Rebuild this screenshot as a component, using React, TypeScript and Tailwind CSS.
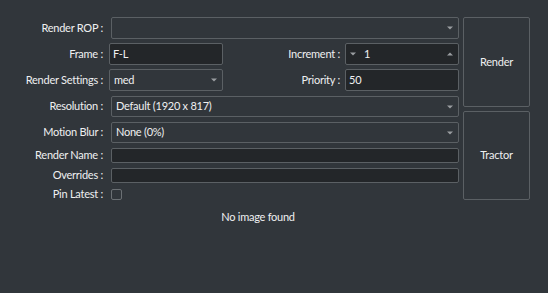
import React from 'react';

const Down = () => (
  <svg width="6" height="4" viewBox="0 0 6 4" className="shrink-0">
    <path d="M0 0.5h6L3 3.5z" fill="#9a9ea1" />
  </svg>
);

const Up = () => (
  <svg width="6" height="4" viewBox="0 0 6 4" className="shrink-0">
    <path d="M0 3.5h6L3 0.5z" fill="#9a9ea1" />
  </svg>
);

const Label = ({ text, w = 'w-[105px]' }: { text: string; w?: string }) => (
  <div className={`${w} shrink-0 pr-[2px] text-right whitespace-nowrap`}>{text}</div>
);

const Combo = ({ value, cls }: { value?: string; cls: string }) => (
  <div className={`${cls} flex items-center justify-between border border-[#5b6064] bg-[#31363b] rounded-[2px] pl-[4px] pr-[5px]`}>
    <span>{value}</span>
    <Down />
  </div>
);

const Edit = ({ value, cls }: { value?: string; cls: string }) => (
  <div className={`${cls} flex items-center border border-[#5b6064] bg-[#232629] rounded-[2px] pl-[3px]`}>
    <span>{value}</span>
  </div>
);

export default function App() {
  return (
    <div
      className="w-[548px] h-[293px] bg-[#31363b] text-[#eff0f1] text-[11px] tracking-[-0.25px] overflow-hidden"
      style={{ fontFamily: 'Lato, "Noto Sans", sans-serif' }}
    >
      <div className="flex pt-[17px] pr-[18px]">
        <div className="flex-1 flex flex-col">
          <div className="flex items-center h-[22px]">
            <Label text="Render ROP :" />
            <Combo cls="ml-[6px] flex-1 h-[22px] mr-[4px]" />
          </div>
          <div className="flex items-center h-[22px] mt-[4px]">
            <Label text="Frame :" />
            <Edit value="F-L" cls="w-[114px] h-[22px] ml-[4px]" />
            <div className="flex-1 text-right pr-[5px]">Increment :</div>
            <div className="w-[114px] h-[22px] mr-[4px] flex items-center border border-[#5b6064] bg-[#232629] rounded-[2px] pl-[4px] pr-[5px]">
              <Down />
              <span className="ml-[8px] flex-1">1</span>
              <Up />
            </div>
          </div>
          <div className="flex items-center h-[22px] mt-[4px]">
            <Label text="Render Settings :" />
            <Combo value="med" cls="w-[114px] h-[22px] ml-[4px]" />
            <div className="flex-1 text-right pr-[5px]">Priority :</div>
            <Edit value="50" cls="w-[114px] h-[22px] mr-[4px]" />
          </div>
          <div className="flex items-center h-[21px] mt-[5px]">
            <Label text="Resolution :" />
            <Combo value="Default (1920 x 817)" cls="ml-[6px] flex-1 h-[21px] mr-[4px]" />
          </div>
          <div className="flex items-center h-[21px] mt-[5px]">
            <Label text="Motion Blur :" />
            <Combo value="None (0%)" cls="ml-[6px] flex-1 h-[21px] mr-[4px]" />
          </div>
          <div className="flex items-center h-[15px] mt-[5px]">
            <Label text="Render Name :" />
            <Edit cls="ml-[6px] flex-1 h-[15px] mr-[4px]" />
          </div>
          <div className="flex items-center h-[15px] mt-[5px]">
            <Label text="Overrides :" />
            <Edit cls="ml-[6px] flex-1 h-[15px] mr-[4px]" />
          </div>
          <div className="flex items-center h-[12px] mt-[5px]">
            <Label text="Pin Latest :" />
            <div className="ml-[6px] w-[11px] h-[11px] border border-[#6b7074] rounded-[2px] bg-[#31363b]" />
          </div>
        </div>
        <div className="w-[67px] flex flex-col gap-[4px]">
          <button className="h-[90px] border border-[#5b6064] bg-[#31363b] rounded-[2px] text-[#eff0f1]">Render</button>
          <button className="h-[89px] border border-[#5b6064] bg-[#31363b] rounded-[2px] text-[#eff0f1]">Tractor</button>
        </div>
      </div>
      <div className="mt-[9px] text-center pr-[32px]">No image found</div>
    </div>
  );
}
